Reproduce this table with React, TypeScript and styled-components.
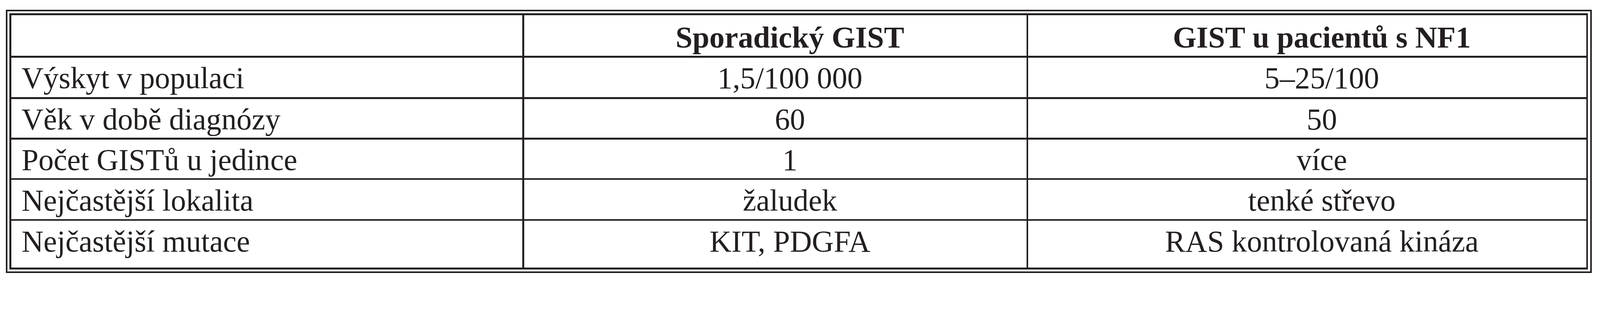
import React from "react";
import styled, { createGlobalStyle } from "styled-components";

const u = (n: number) => `calc(${n} * var(--u))`;

const Global = createGlobalStyle`
  :root { --u: calc(100vw / 4479); }
  html, body { margin: 0; padding: 0; background: #ffffff; overflow: hidden; }
  body { font-family: "Liberation Serif", "Times New Roman", serif; color: #231f20; }
`;

const Frame = styled.div`
  display: inline-block;
  margin: ${u(27)} 0 0 ${u(16)};
  border: ${u(5)} solid #231f20;
  padding: ${u(6)};
  background: #ffffff;
`;

const Table = styled.div`
  display: grid;
  grid-template-columns: ${u(1431)} ${u(1406)} ${u(1562)};
  grid-template-rows: ${u(114)} ${u(111)} ${u(109)} ${u(108)} ${u(110)} ${u(131)};
  gap: ${u(5)};
  padding: ${u(5)};
  background: #231f20;
`;

const Cell = styled.div<{ $center?: boolean; $head?: boolean }>`
  background: #ffffff;
  font-family: "Liberation Serif", "Times New Roman", serif;
  font-size: ${u(85)};
  line-height: 1;
  white-space: nowrap;
  overflow: hidden;
  color: #231f20;
  font-weight: ${(p) => (p.$head ? 700 : 400)};
  text-align: ${(p) => (p.$center ? "center" : "left")};
  padding: ${(p) => (p.$head ? u(21) : u(16))} 0 0
    ${(p) => (p.$center ? u(82) : u(29))};
  box-sizing: border-box;
`;

const rows: [string, string, string][] = [
  ["Výskyt v populaci", "1,5/100 000", "5–25/100"],
  ["Věk v době diagnózy", "60", "50"],
  ["Počet GISTů u jedince", "1", "více"],
  ["Nejčastější lokalita", "žaludek", "tenké střevo"],
  ["Nejčastější mutace", "KIT, PDGFA", "RAS kontrolovaná kináza"],
];

export default function App() {
  return (
    <>
      <Global />
      <Frame>
        <Table>
          <Cell $head />
          <Cell $head $center>Sporadický GIST</Cell>
          <Cell $head $center>GIST u pacientů s NF1</Cell>
          {rows.map(([a, b, c]) => (
            <React.Fragment key={a}>
              <Cell>{a}</Cell>
              <Cell $center>{b}</Cell>
              <Cell $center>{c}</Cell>
            </React.Fragment>
          ))}
        </Table>
      </Frame>
    </>
  );
}
